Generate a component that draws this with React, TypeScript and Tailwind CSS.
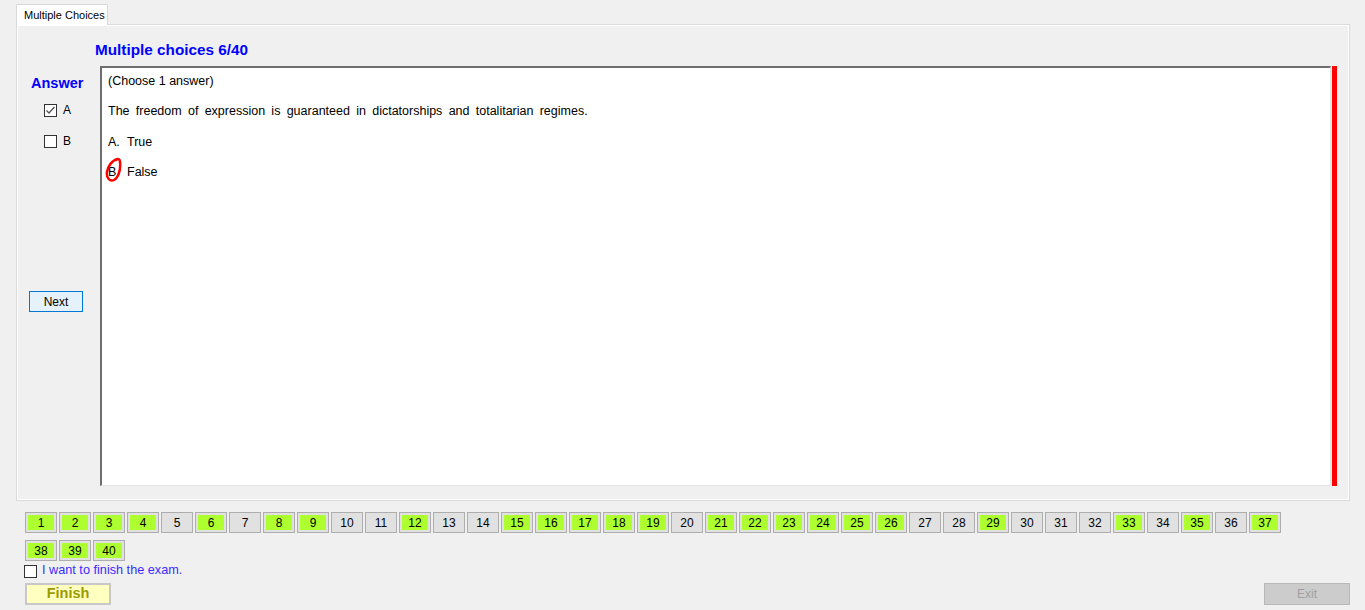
import React from "react";

const green = new Set([1,2,3,4,6,8,9,12,15,16,17,18,19,21,22,23,24,25,26,29,33,35,37,38,39,40]);

function NumBtn({ n }: { n: number }) {
  const g = green.has(n);
  return (
    <div className="w-[32px] h-[21px] border border-[#adadad] bg-[#e1e1e1] p-[2px] flex">
      <div className={g ? "flex-1 bg-[#adff2f] flex items-center justify-center text-[12px] text-black" : "flex-1 flex items-center justify-center text-[12px] text-black"}>
        {n}
      </div>
    </div>
  );
}

function Check({ checked }: { checked?: boolean }) {
  return (
    <div className="w-[13px] h-[13px] shrink-0 border border-[#333333] bg-white flex items-center justify-center">
      {checked && (
        <svg width="11" height="11" viewBox="0 0 11 11">
          <polyline points="1.5,5.5 4,8 9.5,2" fill="none" stroke="#555555" strokeWidth="1.3" />
        </svg>
      )}
    </div>
  );
}

export default function App() {
  const nums = Array.from({ length: 40 }, (_, i) => i + 1);
  return (
    <div className="w-[1365px] h-[610px] bg-[#f0f0f0] overflow-hidden font-['Liberation_Sans',Arial,sans-serif] text-black">
      <div className="pt-[4px] pl-[16px]">
        <div className="relative z-10 -mb-px w-[92px] h-[21px] border border-b-0 border-[#d9d9d9] bg-white flex items-center pl-[7px] text-[11px] text-black">
          Multiple Choices
        </div>
        <div className="w-[1334px] h-[477px] border border-[#dadada] shadow-[inset_1px_1px_0_#ffffff,inset_-1px_-1px_0_#ffffff] bg-[#f0f0f0]">
          <div className="mt-[16px] ml-[78px] h-[18px] leading-[18px] text-[15.3px] font-bold text-[#0000ff]">
            Multiple choices 6/40
          </div>
          <div className="mt-[7px] flex">
            <div className="w-[83px] shrink-0 flex flex-col">
              <div className="mt-[8px] ml-[14px] h-[18px] leading-[18px] text-[14.5px] font-bold text-[#0000ff]">Answer</div>
              <div className="mt-[12px] ml-[27px] h-[13px] flex items-center gap-[6px] text-[12px] leading-[13px]">
                <Check checked />
                <span>A</span>
              </div>
              <div className="mt-[18px] ml-[27px] h-[13px] flex items-center gap-[6px] text-[12px] leading-[13px]">
                <Check />
                <span>B</span>
              </div>
              <div className="mt-[143px] ml-[12px] w-[54px] h-[21px] border border-[#0078d7] bg-[#e5f1fb] flex items-center justify-center text-[12px]">
                Next
              </div>
            </div>
            <div className="relative w-[1231px] h-[420px] border-t-2 border-l-2 border-r border-b border-t-[#6e6e6e] border-l-[#6e6e6e] border-r-[#e3e3e3] border-b-[#e3e3e3] bg-white pl-[6px] text-[12.5px] leading-[30.3px]">
              <div className="-mt-[2px]">(Choose 1 answer)</div>
              <div className="[word-spacing:2.8px]">The freedom of expression is guaranteed in dictatorships and totalitarian regimes.</div>
              <div><span className="inline-block w-[19px]">A.</span>True</div>
              <div><span className="inline-block w-[19px]">B.</span>False</div>
              <svg className="absolute left-[2px] top-[89px]" width="22" height="28" viewBox="104 157 22 28">
                <path d="M118 159 C 112 160, 108 166, 107 172 C 106 178, 110 182, 114 180 C 118 178, 121 170, 120 162 C 120 159, 118 158, 116 160" fill="none" stroke="#ff0000" strokeWidth="2.5" strokeLinecap="round" />
              </svg>
            </div>
            <div className="w-[5px] h-[420px] ml-px bg-[#ff0000]" />
          </div>
        </div>
      </div>
      <div className="mt-[11px] ml-[25px] w-[1260px] flex flex-wrap gap-x-[2px] gap-y-[7px]">
        {nums.map((n) => (
          <NumBtn key={n} n={n} />
        ))}
      </div>
      <div className="mt-[3px] ml-[24px] flex items-center gap-[5px] h-[14px]">
        <Check />
        <span className="text-[12.7px] text-[#3a2cff]">I want to finish the exam.</span>
      </div>
      <div className="mt-[5px] pl-[25px] pr-[15px] flex justify-between">
        <div className="w-[86px] h-[22px] border-2 border-[#c8c8c8] bg-[#ffffc0] flex items-center justify-center text-[14.5px] font-bold text-[#9b9b00]">
          Finish
        </div>
        <div className="w-[86px] h-[22px] border border-[#b8b8b8] bg-[#cccccc] flex items-center justify-center text-[12px] text-[#a0a0a0]">
          Exit
        </div>
      </div>
    </div>
  );
}
